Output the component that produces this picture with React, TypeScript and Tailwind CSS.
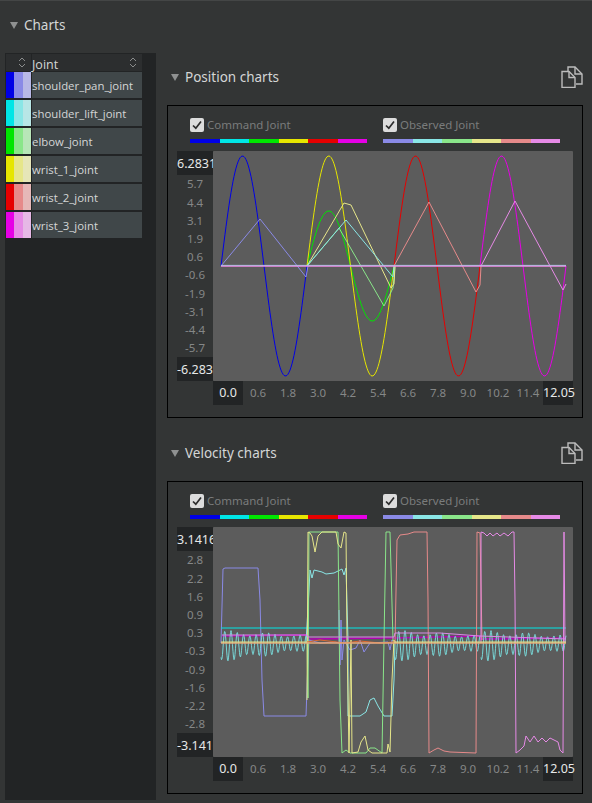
const joints = [
  { name: "shoulder_pan_joint", colors: ["bg-[#0000e6]", "bg-[#8a8ae6]", "bg-[#b8b8e6]"] },
  { name: "shoulder_lift_joint", colors: ["bg-[#00e6e6]", "bg-[#8ae6e6]", "bg-[#b8e6e6]"] },
  { name: "elbow_joint", colors: ["bg-[#00e600]", "bg-[#8ae68a]", "bg-[#b8e6b8]"] },
  { name: "wrist_1_joint", colors: ["bg-[#e6e600]", "bg-[#e6e68a]", "bg-[#e6e6b8]"] },
  { name: "wrist_2_joint", colors: ["bg-[#e60000]", "bg-[#e68a8a]", "bg-[#e6b8b8]"] },
  { name: "wrist_3_joint", colors: ["bg-[#e600e6]", "bg-[#e68ae6]", "bg-[#e6b8e6]"] },
];

const commandBar = ["bg-[#0000e6]", "bg-[#00e6e6]", "bg-[#00e600]", "bg-[#e6e600]", "bg-[#e60000]", "bg-[#e600e6]"];
const observedBar = ["bg-[#8a8ae6]", "bg-[#8ae6e6]", "bg-[#8ae68a]", "bg-[#e6e68a]", "bg-[#e68a8a]", "bg-[#e68ae6]"];

const xTicks = ["0.0", "0.6", "1.8", "3.0", "4.2", "5.4", "6.6", "7.8", "9.0", "10.2", "11.4", "12.05"];

// sine segment, plot coordinates
const sine = (x0: number, x1: number, mid: number, amp: number) => {
  const pts: string[] = [];
  for (let x = x0; x <= x1; x += 1) {
    pts.push(`${x},${(mid - amp * Math.sin(((x - x0) / (x1 - x0)) * Math.PI * 2)).toFixed(1)}`);
  }
  return pts.join(" ");
};

const poly = (pts: number[][]) => pts.map(([x, y]) => `${x - 213},${y - 151}`).join(" ");
const polyV = (pts: number[][]) => pts.map(([x, y]) => `${x - 213},${y - 527}`).join(" ");

// ripple of the observed shoulder_lift velocity, decays over each segment
const ripple = (x0: number, x1: number) => {
  const pts: string[] = [];
  for (let x = x0; x <= x1; x += 0.5) {
    const k = (x - x0) / (x1 - x0);
    const amp = (16 - 8 * k) * (0.85 + 0.15 * Math.sin((x - x0) * 0.17));
    const y = 646 - 3 * k + Math.sin((x - x0) * 1 + 1) * amp;
    pts.push(`${x - 213},${(y - 527).toFixed(1)}`);
  }
  return pts.join(" ");
};

const PositionPlot = () => (
  <svg viewBox="0 0 360 230" className="block w-[360px] h-[230px]" fill="none" strokeWidth="1">
    <polyline points={sine(8, 94, 115, 110)} stroke="#0000e6" />
    <polyline points={sine(94, 181, 115, 55)} stroke="#00e600" />
    <polyline points={sine(94, 181, 115, 110)} stroke="#e6e600" />
    <polyline points={sine(181, 267, 115, 110)} stroke="#e60000" />
    <polyline points={sine(267, 353, 115, 110)} stroke="#e600e6" />
    <polyline points={poly([[221, 266], [260, 219], [306, 277], [308, 266]])} stroke="#8a8ae6" />
    <polyline points={poly([[307, 266], [339, 228], [384, 306], [393, 288], [395, 266]])} stroke="#8ae68a" />
    <polyline points={poly([[307, 266], [344, 203], [351, 205], [391, 288], [394, 284], [395, 266]])} stroke="#e6e68a" />
    <polyline points={poly([[307, 266], [346, 220], [393, 277], [394, 266]])} stroke="#8ae6e6" />
    <polyline points={poly([[394, 266], [429, 202], [476, 292], [480, 285], [481, 266]])} stroke="#e68a8a" />
    <polyline points={poly([[481, 266], [515, 201], [563, 290], [566, 284]])} stroke="#e68ae6" />
    <line x1="8" y1="114.400" x2="353" y2="114.400" stroke="#8ae6e6" />
    <line x1="8" y1="115.200" x2="353" y2="115.200" stroke="#f08ae6" strokeWidth="1.200" />
  </svg>
);

const VelocityPlot = () => (
  <svg viewBox="0 0 360 230" className="block w-[360px] h-[230px]" fill="none" strokeWidth="1">
    <polyline points={polyV([[222, 636], [307, 635], [308, 639], [394, 638], [480, 636], [481, 639], [566, 638]])} stroke="#b400b4" strokeWidth="1.6" />
    <polyline points={polyV([[221, 643], [223, 569], [225, 568], [258, 568], [260, 600], [262, 680], [264, 716], [306, 716], [308, 660], [309, 640], [320, 643], [335, 642], [339, 643], [339, 610], [340, 665], [341, 620], [342, 660], [344, 640], [350, 650], [356, 648], [360, 640], [364, 652], [370, 643], [388, 642], [390, 650], [392, 640], [394, 643]])} stroke="#8a8ae6" />
    <polyline points={ripple(221, 306)} stroke="#78d8d8" />
    <polyline points={ripple(395, 480)} stroke="#78d8d8" />
    <polyline points={ripple(481, 566)} stroke="#78d8d8" />
    <line x1="8" y1="101" x2="353" y2="101" stroke="#00e6e6" />
    <polyline points={polyV([[306, 643], [309, 590], [310, 570], [312, 578], [314, 570], [322, 572], [326, 574], [334, 573], [342, 569], [344, 575], [346, 568], [348, 640], [348, 716], [360, 716], [366, 712], [370, 700], [374, 698], [378, 706], [384, 716], [392, 716], [394, 680], [395, 643]])} stroke="#8ae6e6" />
    <polyline points={polyV([[307, 643], [308, 698], [309, 532], [338, 532], [340, 700], [342, 753], [346, 750], [350, 753], [366, 753], [370, 748], [375, 748], [382, 753], [384, 640], [386, 532], [390, 532], [393, 640], [394, 650]])} stroke="#8ae68a" />
    <polyline points={polyV([[307, 700], [308, 532], [310, 533], [312, 536], [315, 552], [318, 536], [322, 532], [336, 532], [338, 544], [341, 548], [344, 532], [346, 533], [347, 640], [349, 753], [351, 640], [352, 753], [358, 752], [361, 742], [365, 736], [368, 750], [372, 753], [384, 753], [387, 753], [388, 744], [390, 752], [392, 680], [394, 640], [396, 643]])} stroke="#e6e68a" />
    <polyline points={polyV([[395, 643], [397, 540], [400, 535], [408, 534], [414, 532], [420, 532], [427, 532], [428, 600], [429, 753], [434, 750], [438, 748], [444, 751], [450, 752], [476, 753], [477, 532], [480, 533], [482, 640]])} stroke="#e68a8a" />
    <polyline points={polyV([[481, 643], [481, 532], [484, 533], [487, 536], [490, 533], [493, 536], [497, 533], [500, 536], [504, 533], [508, 536], [512, 532], [514, 532], [515, 600], [516, 753], [520, 750], [524, 746], [526, 736], [530, 742], [534, 736], [538, 742], [542, 738], [546, 742], [550, 738], [558, 742], [560, 750], [563, 753], [564, 532], [565, 643]])} stroke="#e68ae6" />
    <polyline points={polyV([[222, 635], [307, 635], [308, 637], [394, 637], [395, 633], [440, 633], [480, 636], [566, 639]])} stroke="#d88ae6" />
    <polyline points={polyV([[307, 642], [320, 640], [345, 643], [360, 641], [380, 643], [394, 642]])} stroke="#e06a30" />
    <line x1="8" y1="116" x2="353" y2="116" stroke="#e6a87a" strokeWidth="1.6" />
    <line x1="8" y1="115" x2="94" y2="115" stroke="#e6e68a" />
    <line x1="181" y1="115" x2="353" y2="115" stroke="#e6e68a" />
  </svg>
);

const CopyIcon = () => (
  <svg width="22" height="22" viewBox="0 0 22 22" fill="none" stroke="#bcbcbc" strokeWidth="1.4" className="shrink-0">
    <path d="M7 5V1h7l7 7v10h-6" />
    <path d="M14 1v7h7" />
    <path d="M1 5.500h7l6 6v10H1z" fill="#333535" />
    <path d="M8 5.500v6h6" />
  </svg>
);

const Legend = ({ label, bar }: { label: string; bar: string[] }) => (
  <div className="w-[177px]">
    <div className="flex items-center gap-[3px] h-[14px]">
      <div className="w-[14px] h-[14px] rounded-[2px] bg-[#dcdcdc] flex items-center justify-center">
        <svg width="10" height="10" viewBox="0 0 10 10" fill="none" stroke="#2c2c2c" strokeWidth="1.7">
          <path d="M1 5.500 3.800 8.200 9 1.500" />
        </svg>
      </div>
      <span className="text-[11.500px] leading-[14px] text-[#7a7c7c]">{label}</span>
    </div>
    <div className="flex h-1 mt-[7px]">
      {bar.map((c) => (
        <div key={c} className={`${c} flex-1`} />
      ))}
    </div>
  </div>
);

const Chart = ({ title, yLabels, children }: { title: string; yLabels: string[]; children: React.ReactNode }) => (
  <div>
    <div className="flex items-center justify-between h-6">
      <div className="flex items-center gap-[6px] pl-[4px]">
        <div className="w-0 h-0 border-x-[4px] border-x-transparent border-t-[7px] border-t-[#8f9191]" />
        <span className="text-[13.500px] text-[#d4d6d6]">{title}</span>
      </div>
      <CopyIcon />
    </div>
    <div className="mt-[16px] w-[416px] h-[313px] border border-black pl-[9px] pt-[12px]">
      <div className="flex gap-[16px] pl-[13px]">
        <Legend label="Command Joint" bar={commandBar} />
        <Legend label="Observed Joint" bar={observedBar} />
      </div>
      <div className="flex mt-[8px]">
        <div className="w-[36px] h-[230px] flex flex-col text-[11.500px] text-[#858787] text-center">
          <div className="h-6 shrink-0 bg-[#222425] text-[#e6e8e8] text-[12.500px] leading-[26px] overflow-hidden whitespace-nowrap">
            {yLabels[0]}
          </div>
          <div className="flex-1 flex flex-col">
            {yLabels.slice(1, -1).map((l) => (
              <div key={l} className="flex-1 flex items-center justify-center">
                {l}
              </div>
            ))}
          </div>
          <div className="h-6 shrink-0 bg-[#222425] text-[#e6e8e8] text-[12.500px] leading-[26px] overflow-hidden whitespace-nowrap">
            {yLabels[yLabels.length - 1]}
          </div>
        </div>
        <div>
          <div className="bg-[#5c5c5c] rounded-[1px]">{children}</div>
          <div className="flex h-6">
            {xTicks.map((t, i) => (
              <div
                key={t}
                className={
                  i === 0 || i === 11
                    ? "w-[30px] bg-[#222425] text-[#e6e8e8] text-[12.500px] leading-6 text-center whitespace-nowrap"
                    : "w-[30px] text-[#858787] text-[11.500px] leading-6 text-center whitespace-nowrap"
                }
              >
                {t}
              </div>
            ))}
          </div>
        </div>
      </div>
    </div>
  </div>
);

export default function App() {
  return (
    <div className="w-[592px] h-[803px] bg-[#333535] border-t border-[#444646] overflow-hidden" style={{ fontFamily: '"Noto Sans", sans-serif' }}>
      <div className="flex items-center gap-[6px] h-6 mt-[12px] pl-[10px]">
        <div className="w-0 h-0 border-x-[4px] border-x-transparent border-t-[7px] border-t-[#8f9191]" />
        <span className="text-[13.500px] text-[#d4d6d6]">Charts</span>
      </div>
      <div className="flex mt-[16px] pl-[5px]">
        <div className="w-[151px] h-[747px] bg-[#222425] pt-[1px] pl-[1px]" style={{ fontFamily: '"Open Sans", sans-serif' }}>
          <div className="w-[136px] flex gap-[1px] h-[17px]">
            <div className="w-[25px] relative bg-[#2c2e2f]">
              <SortArrows />
            </div>
            <div className="flex-1 relative bg-[#2c2e2f] text-[12.500px] leading-[21px] text-[#d4d6d6]">
              Joint
              <SortArrows />
            </div>
          </div>
          <div className="flex flex-col gap-[2px] mt-[1px]">
            {joints.map((j) => (
              <div key={j.name} className="flex gap-[1px] w-[136px] h-[26px]">
                <div className="w-[25px] flex">
                  {j.colors.map((c) => (
                    <div key={c} className={`${c} flex-1`} />
                  ))}
                </div>
                <div className="flex-1 bg-[#404749] text-[11.400px] leading-[27px] text-[#d4d6d6] whitespace-nowrap">
                  {j.name}
                </div>
              </div>
            ))}
          </div>
        </div>
        <div className="w-[416px] ml-[11px] mt-[12px] flex flex-col gap-[23px]">
          <Chart title="Position charts" yLabels={["6.2831", "5.7", "4.4", "3.1", "1.9", "0.6", "-0.6", "-1.9", "-3.1", "-4.4", "-5.7", "-6.283"]}>
            <PositionPlot />
          </Chart>
          <Chart title="Velocity charts" yLabels={["3.1416", "2.8", "2.2", "1.6", "0.9", "0.3", "-0.3", "-0.9", "-1.6", "-2.2", "-2.8", "-3.1416"]}>
            <VelocityPlot />
          </Chart>
        </div>
      </div>
    </div>
  );
}

function SortArrows() {
  return (
    <svg width="8" height="11" viewBox="0 0 8 11" fill="none" stroke="#8a8c8c" className="absolute right-[5px] top-[3px]">
      <path d="M1 4 4 1l3 3M1 7l3 3 3-3" />
    </svg>
  );
}
